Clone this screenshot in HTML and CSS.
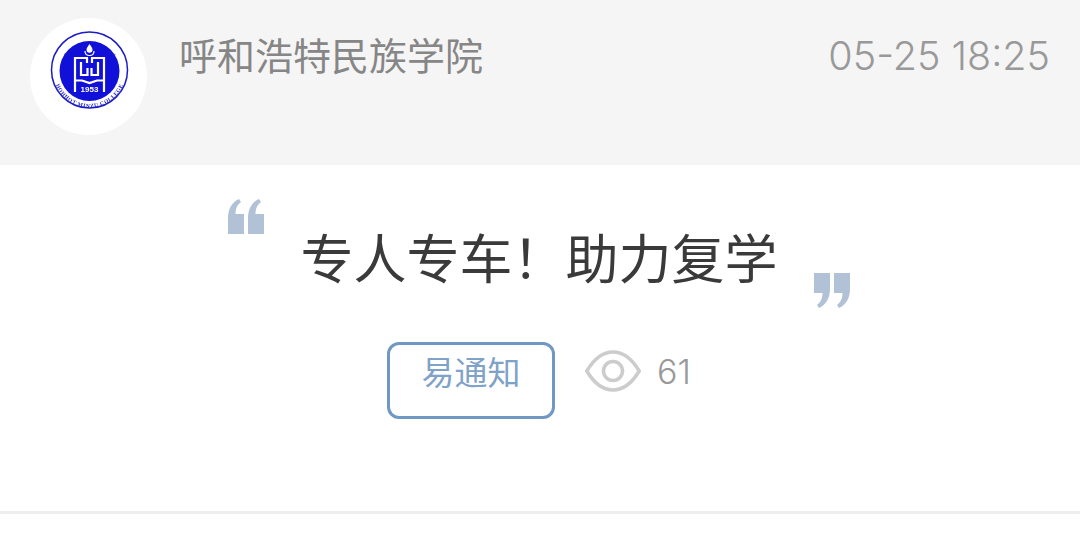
FILE: index.html
```html
<!DOCTYPE html>
<html lang="zh-CN">
  <head>
    <meta charset="utf-8">
    <title>专人专车&#65281;助力复学</title>
    <link rel="stylesheet" href="styles.css">
  </head>
  <body>
    <div class="header">
      <div class="avatar">
        <svg class="seal" viewBox="0 0 80 80" width="80" height="80">
          <defs>
            <path id="topArc" d="M8.100 46 A32.800 32.800 0 0 1 72.900 46"></path>
            <path id="botArc" d="M4.340 46 A36.500 36.500 0 0 0 76.660 46"></path>
          </defs>
          <circle cx="40.500" cy="40" r="38" fill="#fff" stroke="#1c1cc4" stroke-width="1.500"></circle>
          <circle cx="40.500" cy="41" r="30" fill="#1010d8"></circle>
          <text class="sealTop"><textPath href="#topArc" startOffset="50%" text-anchor="middle">ᠬᠥᠬᠡᠬᠣᠲᠠ ᠠᠷᠠᠳ ᠤᠨ</textPath></text>
          <text class="sealBottom"><textPath href="#botArc" startOffset="50%" text-anchor="middle">HOHHOT MINZU COLLEGE</textPath></text>
          <path class="flame" d="M40.500 14c-1.800 2.700-3 4-3 5.700a3 3 0 0 0 6 0c0-1.700-1.200-3-3-5.700z"></path>
          <path class="mark markThin" d="M36 21c0 3 2 4.500 4.500 4.500s4.500-1.500 4.500-4.500"></path>
          <path class="mark" d="M26 62V28H38V33M55 62V28H43V33"></path>
          <path class="mark" d="M32 32V45H38.500V38M49 32V45H42.500V38"></path>
          <path class="mark" d="M26 50.500H33L40.500 53L48 50.500H55"></path>
          <text class="sealYear" x="40.500" y="62">1953</text>
        </svg>
      </div>
      <div class="school">呼和浩特民族学院</div>
      <div class="time">05-25 18:25</div>
    </div>

    <div class="main">
      <div class="titleRow">
        <svg class="quote quoteOpen" viewBox="0 0 36 36" width="36" height="36">
          <path d="M0 35V19C0 10 4 3 11 0l2 3C9 6 7.500 10 7.500 15H16v20zM20 35V19c0-9 4-16 11-19l2 3c-4 3-5.500 7-5.500 12H36v20z"></path>
        </svg>
        <h1 class="title">专人专车&#65281;助力复学</h1>
        <svg class="quote quoteClose" viewBox="0 0 36 36" width="36" height="36">
          <path d="M36 1v16c0 9-4 16-11 19l-2-3c4-3 5.500-7 5.500-12H20V1zM16 1v16c0 9-4 16-11 19l-2-3c4-3 5.500-7 5.500-12H0V1z"></path>
        </svg>
      </div>
      <div class="meta">
        <div class="tag">易通知</div>
        <svg class="eye" viewBox="0 0 56 42" width="56" height="42">
          <path d="M1.800 21C9 9 18 2 28 2s19 7 26.200 19C47 33 38 40 28 40S9 33 1.800 21z"></path>
          <circle cx="28" cy="21" r="9.500"></circle>
        </svg>
        <span class="views">61</span>
      </div>
    </div>
    <div class="rule"></div>
  </body>
</html>
```

FILE: styles.css
```css
*{
  padding: 0px;
  margin: 0px;
  box-sizing: border-box;
}

body{
  background-color: white;
  font-family: "Inter", "Noto Sans CJK SC", sans-serif;
}

.header{
  height: 165px;
  padding: 18px 30px 0px 30px;
  display: flex;
  align-items: flex-start;
  background-color: #f5f5f5;
}

.avatar{
  width: 117px;
  height: 117px;
  padding-top: 12px;
  display: flex;
  justify-content: center;
  align-items: flex-start;
  flex-shrink: 0;
  border-radius: 50%;
  background-color: white;
}

.seal{
  filter: blur(0.4px);
}

.sealTop{
  font-family: "DejaVu Sans", sans-serif;
  font-size: 5.500px;
  letter-spacing: 0.4px;
  fill: #1c1cc4;
}

.sealBottom{
  font-family: "Liberation Serif", serif;
  font-size: 5.500px;
  font-weight: bold;
  letter-spacing: 0.6px;
  fill: #1c1cc4;
}

.flame{
  fill: white;
}

.mark{
  fill: none;
  stroke: white;
  stroke-width: 2.200;
}

.markThin{
  stroke-width: 1.200;
}

.sealYear{
  font-family: "Liberation Sans", sans-serif;
  font-size: 8px;
  font-weight: bold;
  text-anchor: middle;
  fill: white;
}

.school{
  margin-left: 32px;
  margin-top: 13px;
  font-family: "Noto Sans CJK SC", sans-serif;
  font-size: 38px;
  line-height: 46px;
  color: #868686;
}

.time{
  margin-left: auto;
  margin-top: 15px;
  font-size: 39.500px;
  line-height: 46px;
  font-weight: 300;
  color: #999999;
}

.main{
  height: 346px;
  padding-top: 32px;
  display: flex;
  flex-direction: column;
  align-items: center;
}

.titleRow{
  width: 622px;
  height: 112px;
  display: flex;
  justify-content: space-between;
  transform: translateX(-1px);
}

.title{
  margin-top: 29px;
  font-family: "Noto Sans CJK SC", sans-serif;
  font-size: 53px;
  line-height: 60px;
  font-weight: 400;
  color: #3a3a3a;
}

.quote{
  fill: #b2c2d6;
  filter: blur(0.6px);
}

.quoteOpen{
  margin-top: 2px;
}

.quoteClose{
  margin-top: 75px;
}

.meta{
  margin-top: 33px;
  display: flex;
  align-items: flex-start;
  transform: translateX(-1px);
}

.tag{
  width: 168px;
  height: 77px;
  padding-top: 3px;
  text-align: center;
  font-family: "Noto Sans CJK SC", sans-serif;
  font-size: 33px;
  line-height: 46px;
  font-weight: 400;
  color: #7fa2c8;
  border: 3px solid #7098c2;
  border-radius: 12px;
}

.eye{
  margin-left: 30px;
  margin-top: 8px;
  fill: none;
  stroke: #cccccc;
  stroke-width: 3.500;
}

.views{
  margin-left: 16px;
  margin-top: 7px;
  font-size: 34px;
  line-height: 46px;
  font-weight: 300;
  color: #999999;
}

.rule{
  height: 3px;
  background-color: #eeeeee;
}
```
